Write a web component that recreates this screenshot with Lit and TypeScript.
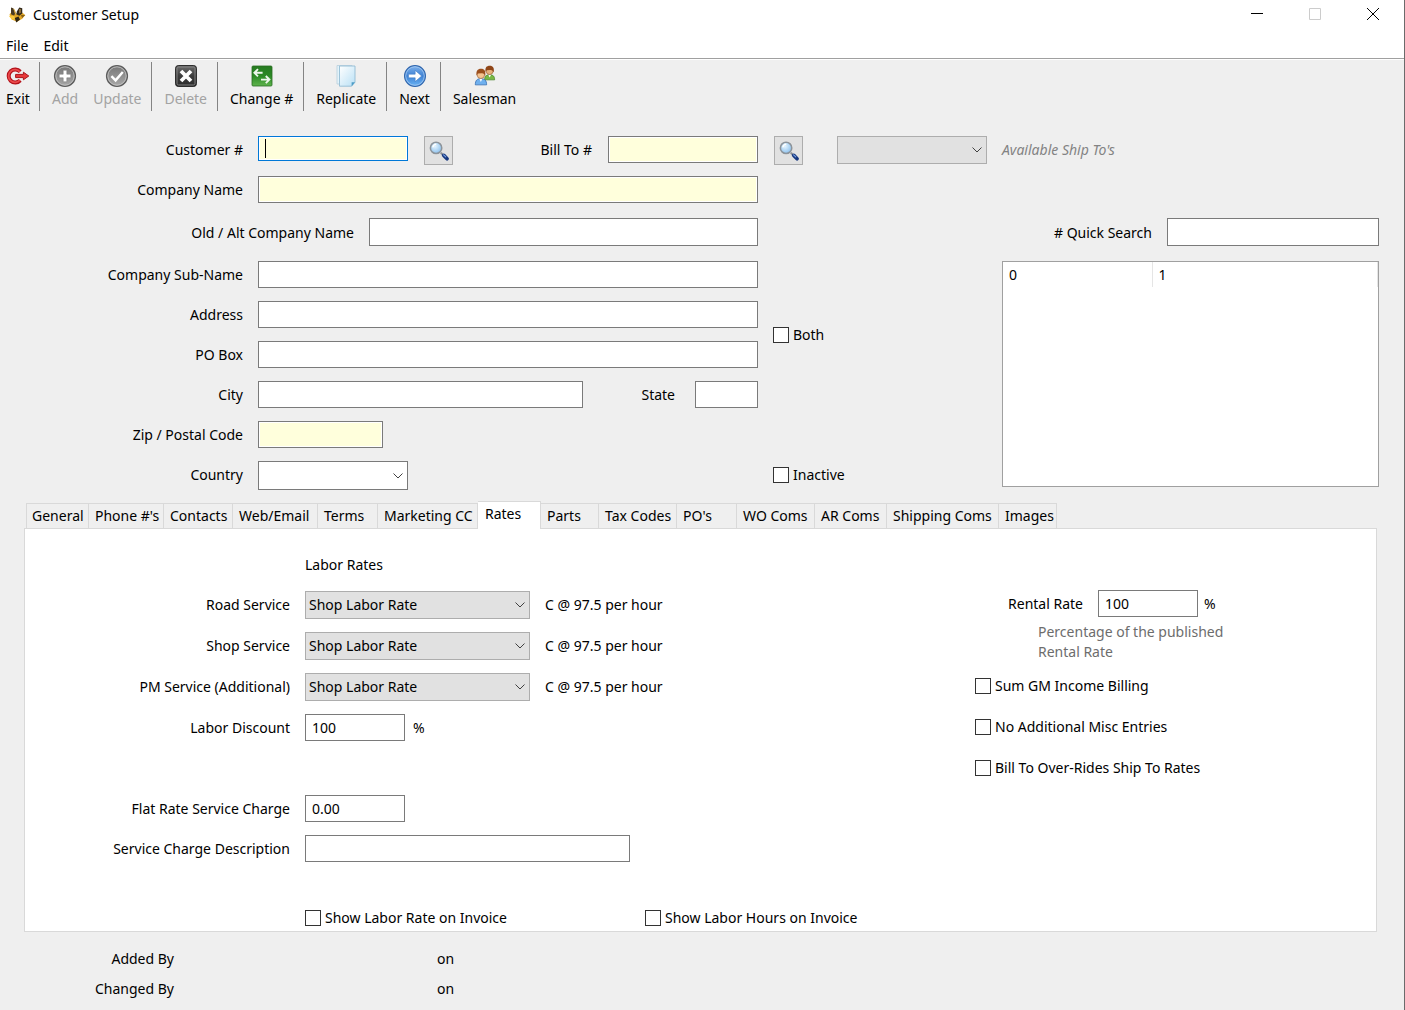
import { LitElement, html, css, svg, nothing, TemplateResult } from "lit";
import { customElement, property, state } from "lit/decorators.js";
import { classMap } from "lit/directives/class-map.js";
import { styleMap } from "lit/directives/style-map.js";

const icons: Record<string, TemplateResult> = {
  exit: svg`
    <path d="M14.2 7.6A6.6 6.6 0 1 0 14.2 16.4" fill="none" stroke="#b3121a" stroke-width="4"/>
    <path d="M13.9 7.9A6.4 6.4 0 1 0 13.9 16.1" fill="none" stroke="#ec4a4c" stroke-width="1.8"/>
    <path d="M9.6 10.4H17.4V8.2L22.8 12L17.4 15.8V13.6H9.6Z" fill="#e8383a" stroke="#a9141a" stroke-width="1"/>`,
  add: svg`
    <circle cx="12" cy="12" r="10.4" fill="url(#gray)" stroke="#5d5d5d" stroke-width="1.4"/>
    <circle cx="12" cy="12" r="9.2" fill="none" stroke="#c4c4c4" stroke-width=".9"/>
    <path d="M10.2 6.2h3.6v4h4v3.6h-4v4h-3.6v-4h-4v-3.6h4z" fill="#fff" stroke="#777" stroke-width=".5"/>`,
  update: svg`
    <circle cx="12" cy="12" r="10.4" fill="url(#gray)" stroke="#5d5d5d" stroke-width="1.4"/>
    <circle cx="12" cy="12" r="9.2" fill="none" stroke="#c4c4c4" stroke-width=".9"/>
    <path d="M6.4 12.2L10.6 16.4L17.8 8" fill="none" stroke="#fff" stroke-width="2.4"/>`,
  delete: svg`
    <rect x="1.6" y="1.6" width="20.8" height="20.8" rx="2.6" fill="url(#dark)" stroke="#222" stroke-width="1"/>
    <rect x="3" y="3" width="18" height="18" rx="1.6" fill="none" stroke="#888" stroke-width=".9"/>
    <path d="M7 7L17 17M17 7L7 17" stroke="#fff" stroke-width="3.8"/>`,
  change: svg`
    <rect x="2" y="2" width="20" height="20" rx="1" fill="url(#green)" stroke="#2a6d22" stroke-width=".8"/>
    <path d="M12.6 8.8H4.6M8 5.2L4.4 8.8L8 12.4" fill="none" stroke="#eef7ec" stroke-width="1.9"/>
    <path d="M11 15.6H19M15.8 12L19.4 15.6L15.8 19.2" fill="none" stroke="#eef7ec" stroke-width="1.9"/>`,
  replicate: svg`
    <path d="M3 1.5H18V20H3Z" fill="#e3f3fb" stroke="#b8cfdd" stroke-width=".8"/>
    <path d="M5.5 2H21V18.2L17.6 22.2H5.5Z" fill="url(#paper)" stroke="#93bcd4" stroke-width=".9"/>
    <path d="M21 18.2H17.6V22.2Z" fill="#4d9cc6"/>`,
  next: svg`
    <circle cx="12" cy="12" r="10.4" fill="url(#blue)" stroke="#2f66ae" stroke-width="1.2"/>
    <circle cx="12" cy="12" r="9.3" fill="none" stroke="#a9cdf3" stroke-width=".8"/>
    <path d="M5.6 10.2H12.2V6.4L18.6 12L12.2 17.6V13.8H5.6Z" fill="#fff" stroke="#3b78c0" stroke-width=".5"/>`,
  salesman: svg`<g transform="translate(.8 .6) scale(.93)">
    <path d="M11.6 16.4C11.6 12.4 13.4 11 17 11S22.4 12.4 22.4 16.4Z" fill="#78b843" stroke="#46822a" stroke-width=".8"/>
    <path d="M15.6 11L17 14L18.6 11Z" fill="#fff"/>
    <circle cx="17" cy="7" r="3.7" fill="#e8b07c" stroke="#8d4d20" stroke-width=".6"/>
    <path d="M12.8 8C11.8 3.4 13.6 1.2 17.2 1.2S22.2 3.4 21.4 8.6C20.6 6.2 19.4 5.6 17.4 5.8L13.8 6Z" fill="#8f4517"/>
    <path d="M1.6 21.8C1.6 16.8 3.6 15.2 7.6 15.2S13.8 16.8 13.8 21.8Z" fill="#6fb0ee" stroke="#2f69b0" stroke-width=".8"/>
    <path d="M6 15.2L7.6 18.6L9.2 15.2Z" fill="#fff"/>
    <circle cx="7.6" cy="11" r="4" fill="#f5c38f" stroke="#8d4d20" stroke-width=".6"/>
    <path d="M3 12C2.2 6.8 4 4.4 7.8 4.4S13 6.8 12.3 12.4C11.4 9.8 10.2 9.2 8.2 9.4L4.2 9.6Z" fill="#9c4f1d"/>
  </g>`,
  search: svg`
    <path d="M14 14L18 18" stroke="#8a8f95" stroke-width="2.4"/>
    <path d="M17.2 16.8L20.8 20.4" stroke="#16377f" stroke-width="4" stroke-linecap="round"/>
    <path d="M17 16.2L19.4 18.4" stroke="#7da5e8" stroke-width="1.2" stroke-linecap="round"/>
    <circle cx="8.8" cy="8.6" r="6.2" fill="url(#lens)" stroke="#8d949b" stroke-width="1.7"/>
    <path d="M5.2 8C5.6 5.8 7 4.6 9 4.4" fill="none" stroke="#fff" stroke-width="1.4"/>`,
  app: svg`
    <path d="M2 11L5 8L9 10L13 10L18 8L23 12L19 17L12 21L5 18Z" fill="#e0a526"/>
    <path d="M4 2L7 3L10 9L8 13L4 11Z" fill="#4a3b22"/>
    <path d="M7 3L9 5L11 10L9 10Z" fill="#d9a63a"/>
    <path d="M12 7L15 2L19 3L19 10L15 13L11 11Z" fill="#33291a"/>
    <path d="M15 4L17 4L17 9L15 10Z" fill="#a88240"/>
    <path d="M1 13L8 13L10 18L5 18Z" fill="#fac73c"/>
    <path d="M9 16L14 14L16 18L11 22Z" fill="#2f2614"/>
    <path d="M17 12L23 12L19 16Z" fill="#8b6417"/>`,
};

@customElement("ui-icon")
export class UiIcon extends LitElement {
  static styles = css`
    :host { display: block; width: 24px; height: 24px; }
    .icon { display: block; width: 100%; height: 100%; }
  `;
  @property() name = "add";

  render() {
    return html`<svg class="icon" viewBox="0 0 24 24" aria-hidden="true">
      <defs>
        <linearGradient id="gray" x1="0" y1="0" x2="0" y2="1"><stop offset="0" stop-color="#777"/><stop offset="1" stop-color="#a9a9a9"/></linearGradient>
        <linearGradient id="dark" x1="0" y1="0" x2="0" y2="1"><stop offset="0" stop-color="#6c6c6c"/><stop offset=".5" stop-color="#3c3c3c"/><stop offset="1" stop-color="#2b2b2b"/></linearGradient>
        <linearGradient id="green" x1="0" y1="0" x2="0" y2="1"><stop offset="0" stop-color="#257a20"/><stop offset=".5" stop-color="#2c8a25"/><stop offset="1" stop-color="#5fb44e"/></linearGradient>
        <linearGradient id="paper" x1="0" y1="0" x2="1" y2="1"><stop offset="0" stop-color="#fff"/><stop offset="1" stop-color="#b9e0f5"/></linearGradient>
        <linearGradient id="blue" x1="0" y1="0" x2="0" y2="1"><stop offset="0" stop-color="#7fb2ec"/><stop offset=".5" stop-color="#3f82d4"/><stop offset="1" stop-color="#6ab4f5"/></linearGradient>
        <radialGradient id="lens" cx=".4" cy=".35" r=".7"><stop offset="0" stop-color="#e6f5ff"/><stop offset="1" stop-color="#86bdec"/></radialGradient>
      </defs>
      ${icons[this.name] ?? nothing}
    </svg>`;
  }
}

interface Tool { icon: string; label: string; disabled?: boolean }
interface Tab { label: string; width: number }

const toolGroups: Tool[][] = [
  [{ icon: "exit", label: "Exit" }],
  [{ icon: "add", label: "Add", disabled: true }, { icon: "update", label: "Update", disabled: true }],
  [{ icon: "delete", label: "Delete", disabled: true }],
  [{ icon: "change", label: "Change #" }],
  [{ icon: "replicate", label: "Replicate" }],
  [{ icon: "next", label: "Next" }],
  [{ icon: "salesman", label: "Salesman" }],
];

const tabs: Tab[] = [
  { label: "General", width: 63 },
  { label: "Phone #'s", width: 75 },
  { label: "Contacts", width: 69 },
  { label: "Web/Email", width: 85 },
  { label: "Terms", width: 60 },
  { label: "Marketing CC", width: 100 },
  { label: "Rates", width: 63 },
  { label: "Parts", width: 58 },
  { label: "Tax Codes", width: 78 },
  { label: "PO's", width: 60 },
  { label: "WO Coms", width: 78 },
  { label: "AR Coms", width: 72 },
  { label: "Shipping Coms", width: 112 },
  { label: "Images", width: 58 },
];

const laborRates = [
  { id: "road", label: "Road Service", note: "C @ 97.5 per hour" },
  { id: "shop", label: "Shop Service", note: "C @ 97.5 per hour" },
  { id: "pm", label: "PM Service (Additional)", note: "C @ 97.5 per hour" },
];

@customElement("app-root")
export class AppRoot extends LitElement {
  static styles = css`
    :host {
      display: block;
      font: 14px/20px "Noto Sans", "Open Sans", sans-serif;
      color: #000;
    }
    *, *::before, *::after { box-sizing: border-box; }
    input, select, button { font: inherit; color: inherit; margin: 0; border-radius: 0; }

    .window { display: flex; flex-direction: column; min-height: 100vh; background: #efefef; border-right: 1px solid #6b6b6b; }

    .titlebar { display: flex; align-items: center; height: 30px; padding: 0 2px 0 8px; background: #fff; }
    .app-icon { width: 18px; height: 18px; margin-right: 7px; }
    .title { flex: 1; margin: 0; font-size: 14px; font-weight: 400; }
    .caption { display: grid; place-items: center; width: 58px; height: 30px; padding: 0 0 2px; border: 0; background: none; }
    .caption-icon { width: 12px; height: 12px; fill: none; stroke: #000; }
    .caption:disabled .caption-icon { stroke: #ccc; }

    .menubar { display: flex; gap: 15px; height: 28px; padding: 4px 0 0 6px; background: #fff; }
    .menu { padding: 0; border: 0; background: none; }

    .toolbar { display: flex; height: 53px; padding-top: 2px; border-top: 1px solid #a0a0a0; box-shadow: inset 0 1px #fff; }
    .group { display: flex; gap: 15px; margin-top: 1px; height: 49px; padding: 0 10px 0 12px; border-right: 1px solid #848484; }
    .group:first-child { padding: 0 9px 0 6px; }
    .group:last-child { border-right: 0; }
    .tool { display: flex; flex-direction: column; align-items: center; gap: 1px; padding: 2px 0 0; border: 0; background: none; white-space: nowrap; }
    .tool:disabled { color: #a3a3a3; }

    .label { text-align: right; align-self: center; white-space: nowrap; }
    .field { display: block; width: 100%; min-width: 0; height: 27px; padding: 0 6px; border: 1px solid #7a7a7a; background: #fff; outline: 0; }
    .field.key { background: #ffffdc; box-shadow: inset 0 0 0 1px #fff; }
    .field.current { height: 25px; border-color: #0078d7; caret-color: transparent; }
    .w150 { width: 150px; }
    .w125 { width: 125px; }
    .w100 { width: 100px; }
    .w63 { width: 63px; }

    .current-wrap { position: relative; }
    .caret { position: absolute; left: 7px; top: 3px; width: 1px; height: 19px; background: #000; pointer-events: none; }

    .combo { display: grid; align-items: center; }
    .combo > * { grid-area: 1 / 1; }
    .select { width: 100%; height: 28px; padding: 0 24px 0 3px; border: 1px solid #adadad; background: #e1e1e1; appearance: none; opacity: 1; }
    .select.plain { height: 29px; background: #fff; border-color: #7a7a7a; }
    .chevron { justify-self: end; width: 10px; height: 6px; margin-right: 5px; fill: none; stroke: #404040; pointer-events: none; }

    .lookup { display: grid; place-items: center; width: 29px; height: 29px; padding: 0; border: 1px solid #adadad; background: #e1e1e1; }
    .lookup-icon { width: 22px; height: 22px; }

    .check { display: flex; align-items: center; gap: 4px; white-space: nowrap; }
    .box { flex: none; width: 16px; height: 16px; appearance: none; border: 1px solid #333; background: #fff; }
    .box:checked { background: #333; box-shadow: inset 0 0 0 3px #fff; }

    .header {
      display: grid;
      grid-template-columns: 243px minmax(0, 1fr) 214px 377px;
      grid-template-rows: 27px 29px 30px repeat(6, 27px);
      gap: 13px 15px;
      align-items: start;
      padding: 25px 25px 14px 0;
    }
    .header > .label { grid-column: 1; align-self: start; line-height: 27px; }
    .main { grid-column: 2; display: flex; gap: 16px; min-width: 0; height: 27px; }
    .main .push { margin-left: auto; }
    .main .state { margin-right: 4px; }
    .grow { flex: 1; max-width: 325px; }
    .alt { grid-column: 1 / 3; grid-row: 3; align-self: stretch; display: grid; grid-template-columns: 354px minmax(0, 1fr); gap: 15px; }
    .alt .field, .quick .field { height: 28px; }
    .ship { grid-column: 3; grid-row: 1; display: flex; justify-content: space-between; align-items: flex-start; padding-left: 1px; }
    .ship-note { grid-column: 4; grid-row: 1; align-self: center; color: #838383; font-style: italic; }
    .both { grid-column: 3; grid-row: 5 / 7; align-self: center; }
    .inactive { grid-column: 3; grid-row: 9; align-self: center; }
    .quick { grid-column: 4; grid-row: 3; align-self: stretch; display: grid; grid-template-columns: 1fr 212px; gap: 15px; }
    .results { grid-column: 4; grid-row: 4 / 10; height: 226px; border: 1px solid #a0a0a0; background: #fff; }
    .table { width: 100%; border-collapse: collapse; table-layout: fixed; }
    .th { height: 25px; padding: 0 6px; border-right: 1px solid #e5e5e5; font-weight: 400; text-align: left; }
    .th:first-child { width: 149px; }

    .tabs { display: flex; align-items: flex-end; height: 28px; margin: -2px 27px 0 26px; }
    .tab { flex: 0 1 auto; height: 25px; padding: 0 0 0 6px; border: 1px solid #d9d9d9; border-left-width: 0; border-bottom: 0; background: #efefef; text-align: left; white-space: nowrap; }
    .tab:first-child { padding-left: 5px; border-left-width: 1px; }
    .tab.active { position: relative; height: 28px; padding-left: 7px; padding-bottom: 3px; margin-bottom: -1px; background: #fff; }

    .panel { display: grid; grid-template-columns: minmax(0, 1fr) 401px; margin: 0 27px 0 24px; border: 1px solid #d9d9d9; background: #fff; }
    .rates {
      display: grid;
      grid-template-columns: 265px minmax(0, 1fr);
      grid-template-rows: 27px 28px 28px 28px 27px 28px 27px 27px 17px 26px;
      gap: 13px 15px;
      align-items: center;
      padding-top: 22px;
    }
    .rates .label { grid-column: 1; }
    .cell { grid-column: 2; display: flex; align-items: center; gap: 15px; }
    .cell.near { gap: 8px; }
    .heading { grid-column: 2; margin: 0; font-size: 14px; font-weight: 400; }
    .rate-select { flex: 0 1 225px; }
    .flat { grid-row: 7; }
    .desc { grid-row: 8; }
    .desc .field { width: 325px; }
    .invoice { grid-row: 10; display: grid; grid-template-columns: 325px auto; }

    .side { display: flex; flex-direction: column; padding-top: 61px; }
    .rental { display: grid; grid-template-columns: 108px 100px auto; column-gap: 15px; align-items: center; }
    .rental .unit { margin-left: -9px; }
    .hint { width: 210px; margin: 5px 0 14px 63px; color: #6d6d6d; }
    .checks { display: grid; gap: 21px; }

    .audit { display: grid; grid-template-columns: 174px 233px auto; column-gap: 15px; padding: 12px 0 6px; line-height: 30px; margin: 0; }
    .audit .label { grid-column: 1; }
    .on { grid-column: 3; }
  `;

  @state() private activeTab = "Rates";

  private combo(id: string, value: string, cls = "", disabled = false) {
    return html`<span class="combo ${cls}">
      <select class=${classMap({ select: true, plain: id === "country" })} id=${id} ?disabled=${disabled}
        aria-label=${disabled ? "Available Ship To's" : nothing}>
        <option>${value}</option>
      </select>
      <svg class="chevron" viewBox="0 0 10 6" aria-hidden="true"><path d="M.5 .5L5 5L9.5 .5"/></svg>
    </span>`;
  }

  private check(label: string, cls = "") {
    return html`<label class="check ${cls}"><input class="box" type="checkbox" />${label}</label>`;
  }

  private lookup(label: string) {
    return html`<button class="lookup" aria-label=${label}><ui-icon class="lookup-icon" name="search"></ui-icon></button>`;
  }

  private renderChrome() {
    return html`
      <header class="titlebar">
        <ui-icon class="app-icon" name="app"></ui-icon>
        <h1 class="title">Customer Setup</h1>
        <button class="caption" aria-label="Minimize"><svg class="caption-icon" viewBox="0 0 12 12"><path d="M0 5.5H12"/></svg></button>
        <button class="caption" aria-label="Maximize" disabled><svg class="caption-icon" viewBox="0 0 12 12"><path d="M.5 .5H11.5V11.5H.5Z"/></svg></button>
        <button class="caption" aria-label="Close"><svg class="caption-icon" viewBox="0 0 12 12"><path d="M0 0L12 12M12 0L0 12"/></svg></button>
      </header>
      <nav class="menubar">
        <button class="menu">File</button>
        <button class="menu">Edit</button>
      </nav>
      <div class="toolbar" role="toolbar">
        ${toolGroups.map((group) => html`<div class="group">
          ${group.map((t) => html`<button class="tool" ?disabled=${t.disabled}>
            <ui-icon name=${t.icon}></ui-icon><span>${t.label}</span>
          </button>`)}
        </div>`)}
      </div>`;
  }

  private renderHeader() {
    return html`<section class="header">
      <label class="label" for="customer">Customer #</label>
      <div class="main">
        <span class="current-wrap">
          <input class="field key current w150" id="customer" /><span class="caret"></span>
        </span>
        ${this.lookup("Find customer")}
        <label class="label push" for="billto">Bill To #</label>
        <input class="field key w150" id="billto" />
      </div>
      <div class="ship">${this.lookup("Find bill to")}${this.combo("shipto", "", "w150", true)}</div>
      <span class="ship-note">Available Ship To's</span>

      <label class="label" for="company">Company Name</label>
      <div class="main"><input class="field key" id="company" /></div>

      <div class="alt">
        <label class="label" for="altname">Old / Alt Company Name</label>
        <input class="field" id="altname" />
      </div>
      <div class="quick">
        <label class="label" for="quick"># Quick Search</label>
        <input class="field" id="quick" />
      </div>
      <div class="results">
        <table class="table">
          <thead><tr><th class="th">0</th><th class="th">1</th></tr></thead>
        </table>
      </div>

      <label class="label" for="subname">Company Sub-Name</label>
      <div class="main"><input class="field" id="subname" /></div>
      <label class="label" for="address">Address</label>
      <div class="main"><input class="field" id="address" /></div>
      <label class="label" for="pobox">PO Box</label>
      <div class="main"><input class="field" id="pobox" /></div>
      ${this.check("Both", "both")}
      <label class="label" for="city">City</label>
      <div class="main">
        <input class="field grow" id="city" />
        <label class="label push state" for="state">State</label>
        <input class="field w63" id="state" />
      </div>
      <label class="label" for="zip">Zip / Postal Code</label>
      <div class="main"><input class="field key w125" id="zip" /></div>
      <label class="label" for="country">Country</label>
      <div class="main">${this.combo("country", "", "w150")}</div>
      ${this.check("Inactive", "inactive")}
    </section>`;
  }

  private renderRates() {
    return html`
      <div class="rates">
        <h2 class="heading">Labor Rates</h2>
        ${laborRates.map((r) => html`
          <label class="label" for=${r.id}>${r.label}</label>
          <div class="cell">${this.combo(r.id, "Shop Labor Rate", "rate-select")}<span>${r.note}</span></div>`)}
        <label class="label" for="discount">Labor Discount</label>
        <div class="cell near"><input class="field w100" id="discount" value="100" /><span>%</span></div>
        <label class="label flat" for="flat">Flat Rate Service Charge</label>
        <div class="cell flat"><input class="field w100" id="flat" value="0.00" /></div>
        <label class="label desc" for="desc">Service Charge Description</label>
        <div class="cell desc"><input class="field" id="desc" /></div>
        <div class="cell invoice">
          ${this.check("Show Labor Rate on Invoice")}${this.check("Show Labor Hours on Invoice")}
        </div>
      </div>
      <div class="side">
        <div class="rental">
          <label class="label" for="rental">Rental Rate</label>
          <input class="field" id="rental" value="100" />
          <span class="unit">%</span>
        </div>
        <p class="hint">Percentage of the published Rental Rate</p>
        <div class="checks">
          ${["Sum GM Income Billing", "No Additional Misc Entries", "Bill To Over-Rides Ship To Rates"].map((c) => this.check(c))}
        </div>
      </div>`;
  }

  render() {
    return html`<div class="window">
      ${this.renderChrome()}
      ${this.renderHeader()}
      <div class="tabs" role="tablist">
        ${tabs.map((t) => html`<button role="tab"
          class=${classMap({ tab: true, active: t.label === this.activeTab })}
          aria-selected=${t.label === this.activeTab ? "true" : "false"}
          style=${styleMap({ width: `${t.width}px` })}
          @click=${() => { this.activeTab = t.label; }}>${t.label}</button>`)}
      </div>
      <section class="panel" role="tabpanel">${this.renderRates()}</section>
      <footer class="audit">
        <span class="label">Added By</span><span class="on">on</span>
        <span class="label">Changed By</span><span class="on">on</span>
      </footer>
    </div>`;
  }
}
